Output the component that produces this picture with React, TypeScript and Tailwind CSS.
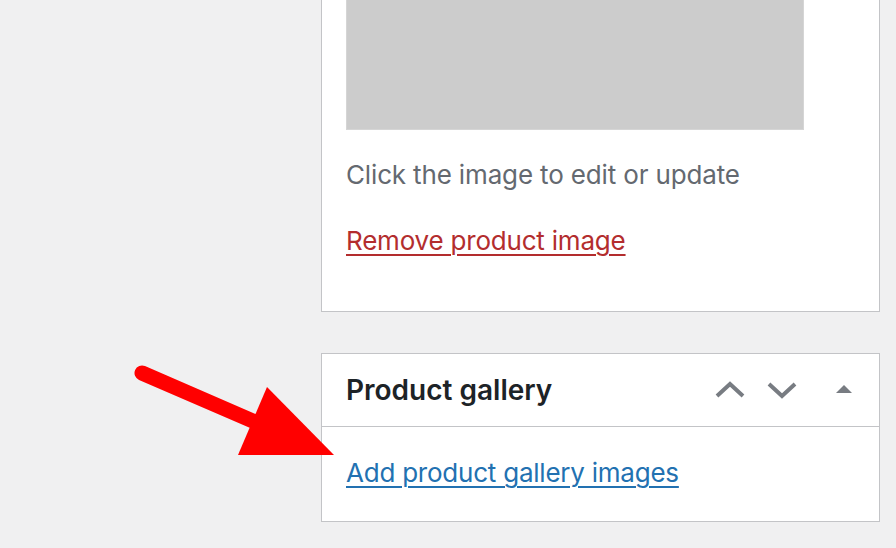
import React from 'react';

function ChevronUp() {
  return (
    <svg width="30" height="20" viewBox="0 0 30 20" fill="none">
      <path d="M2 16 L15 4 L28 16" stroke="#787c82" strokeWidth="4" />
    </svg>
  );
}

function ChevronDown() {
  return (
    <svg width="30" height="20" viewBox="0 0 30 20" fill="none">
      <path d="M2 4 L15 16 L28 4" stroke="#787c82" strokeWidth="4" />
    </svg>
  );
}

function Triangle() {
  return (
    <svg width="16" height="10" viewBox="0 0 16 10">
      <path d="M0 8 L8 0 L16 8 Z" fill="#787c82" />
    </svg>
  );
}

export default function App() {
  return (
    <div className="relative h-[548px] w-[896px] overflow-hidden bg-[#f0f0f1] font-['Inter',sans-serif]">
      <div className="ml-[321px] w-[559px]">
        {/* Product image box */}
        <div className="flex flex-col border-x border-b border-[#c3c4c7] bg-white pl-[24px] pb-[57px]">
          <div className="h-[130px] w-[458px] border-x border-b border-[#d5d5d5] bg-[#cccccc]" />
          <p className="mt-[32px] text-[26px] leading-[26px] tracking-[-0.15px] text-[#646970]">
            Click the image to edit or update
          </p>
          <a href="#" className="mt-[40px] self-start text-[26px] leading-[26px] tracking-[-0.2px] text-[#b32d2e] underline underline-offset-[4px] decoration-[2px]">
            Remove product image
          </a>
        </div>

        {/* Product gallery box */}
        <div className="mt-[41px] border border-[#c3c4c7] bg-white">
          <div className="flex h-[73px] items-center border-b border-[#c3c4c7] pl-[24px] pr-[9px]">
            <h2 className="flex-1 text-[28px] font-semibold leading-[28px] text-[#1d2327]">Product gallery</h2>
            <button className="flex h-[52px] w-[52px] items-center justify-center">
              <ChevronUp />
            </button>
            <button className="flex h-[52px] w-[52px] items-center justify-center">
              <ChevronDown />
            </button>
            <button className="ml-[10px] flex h-[52px] w-[52px] items-center justify-center">
              <Triangle />
            </button>
          </div>
          <div className="pl-[24px] pt-[33px] pb-[33px]">
            <a href="#" className="text-[26px] leading-[26px] tracking-[-0.23px] text-[#2271b1] underline underline-offset-[4px] decoration-[2px]">
              Add product gallery images
            </a>
          </div>
        </div>
      </div>

      {/* red pointer arrow */}
      <svg className="absolute left-0 top-0" width="896" height="548" viewBox="0 0 896 548">
        <line x1="142" y1="373" x2="262" y2="425" stroke="#ff0000" strokeWidth="15" strokeLinecap="round" />
        <polygon points="267,387 334,455 238,455" fill="#ff0000" />
      </svg>
    </div>
  );
}
